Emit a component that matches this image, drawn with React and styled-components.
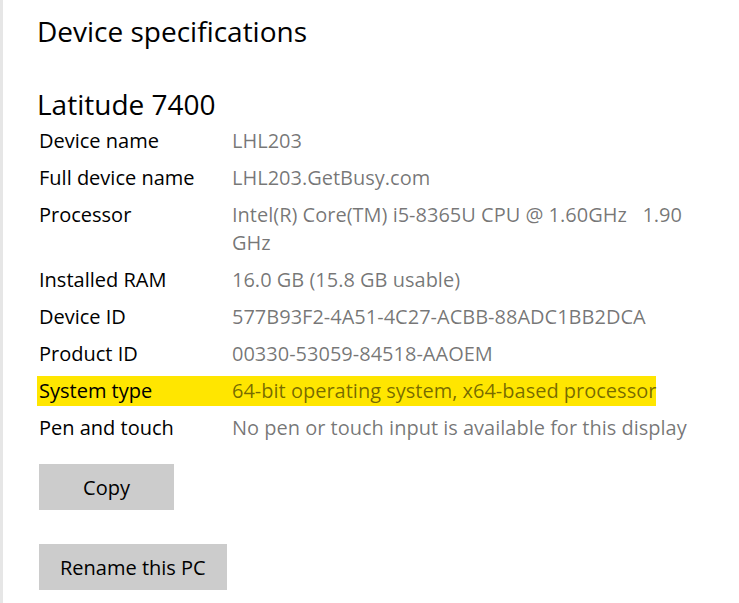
import React from 'react';
import styled, { createGlobalStyle } from 'styled-components';

const GlobalStyle = createGlobalStyle`
  html, body {
    margin: 0;
    padding: 0;
    background: #ffffff;
  }
`;

const Page = styled.div`
  min-height: 603px;
  box-sizing: border-box;
  border-left: 3px solid #e6e6e6;
  padding: 12px 0 0 34px;
  font-family: "Open Sans", "Noto Sans", sans-serif;
  color: #000000;
`;

const Title = styled.h1`
  margin: 0;
  font-size: 28px;
  font-weight: 400;
  line-height: 38px;
`;

const ModelName = styled.h2`
  margin: 37px 0 0;
  font-size: 28px;
  font-weight: 400;
  line-height: 34px;
`;

const SpecList = styled.div`
  display: flex;
  flex-direction: column;
  align-items: flex-start;
  gap: 7px;
  margin-top: 5px;
`;

const SpecRow = styled.div`
  display: grid;
  grid-template-columns: 193px auto;
  padding: 1px 0 1px 2px;
  font-size: 20px;
  line-height: 28px;
  background: ${(p) => (p.$highlight ? '#ffe600' : 'transparent')};
`;

const Label = styled.div`
  color: #000000;
`;

const Value = styled.div`
  color: rgba(0, 0, 0, 0.55);
  max-width: 470px;
`;

const Actions = styled.div`
  display: flex;
  flex-direction: column;
  align-items: flex-start;
  gap: 34px;
  margin: 21px 0 0 2px;
`;

const Button = styled.button`
  height: 46px;
  min-width: ${(p) => p.$minWidth || 0}px;
  padding: 0 21px;
  border: none;
  border-radius: 0;
  background: #cccccc;
  color: #000000;
  font-family: inherit;
  font-size: 20px;
  cursor: pointer;
`;

const specs = [
  ['Device name', 'LHL203'],
  ['Full device name', 'LHL203.GetBusy.com'],
  ['Processor', 'Intel(R) Core(TM) i5-8365U CPU @ 1.60GHz\u00a0\u00a0 1.90 GHz'],
  ['Installed RAM', '16.0 GB (15.8 GB usable)'],
  ['Device ID', '577B93F2-4A51-4C27-ACBB-88ADC1BB2DCA'],
  ['Product ID', '00330-53059-84518-AAOEM'],
  ['System type', '64-bit operating system, x64-based processor', true],
  ['Pen and touch', 'No pen or touch input is available for this display'],
];

const App = () => (
  <>
    <GlobalStyle />
    <Page>
      <Title>Device specifications</Title>
      <ModelName>Latitude 7400</ModelName>
      <SpecList>
        {specs.map(([label, value, hl]) => (
          <SpecRow key={label} $highlight={hl}>
            <Label>{label}</Label>
            <Value>{value}</Value>
          </SpecRow>
        ))}
      </SpecList>
      <Actions>
        <Button $minWidth={135}>Copy</Button>
        <Button>Rename this PC</Button>
      </Actions>
    </Page>
  </>
);

export default App;
